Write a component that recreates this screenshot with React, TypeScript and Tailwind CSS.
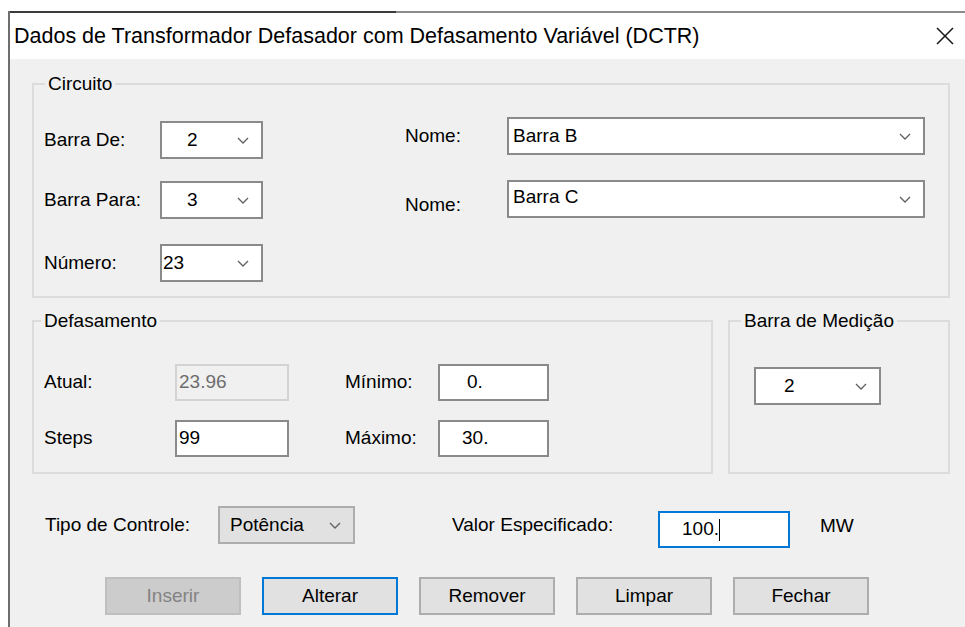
import React from 'react';

const font = { fontFamily: '"Liberation Sans", Arial, sans-serif' };

function Chevron() {
  return (
    <svg width="12" height="7" viewBox="0 0 12 7" className="shrink-0">
      <polyline points="1,1 6,6 11,1" fill="none" stroke="#606060" strokeWidth="1.3" />
    </svg>
  );
}

function Combo({ value, className, textClass }: { value: string; className: string; textClass: string }) {
  return (
    <div className={`flex items-center justify-between bg-white border-2 border-[#8a8a8a] h-[38px] pr-[12px] ${className}`}>
      <span className={textClass}>{value}</span>
      <Chevron />
    </div>
  );
}

function Field({ value, className, textClass }: { value: string; className: string; textClass: string }) {
  return (
    <div className={`flex items-center bg-white border-2 border-[#8a8a8a] h-[37px] ${className}`}>
      <span className={textClass}>{value}</span>
    </div>
  );
}

function Button({ label, state }: { label: string; state?: 'disabled' | 'default' }) {
  const look =
    state === 'disabled'
      ? 'bg-[#cccccc] border-[#bfbfbf] text-[#838383]'
      : state === 'default'
        ? 'bg-[#e1e1e1] border-[#0078d7] text-black'
        : 'bg-[#e1e1e1] border-[#adadad] text-black';
  return (
    <div className={`flex items-center justify-center w-[136px] h-[38px] border-2 ${look}`}>{label}</div>
  );
}

export default function App() {
  return (
    <div className="w-[965px] h-[627px] bg-white pt-[11px] overflow-hidden text-[19px] text-black" style={font}>
      <div className="ml-[8px] h-[616px] flex flex-col border-l-2 border-[#6e6e6e]">
        {/* top edge of the window frame */}
        <div className="flex h-[2px] shrink-0">
          <div className="w-[386px] bg-[#3c3c3c]" />
          <div className="flex-1 bg-[#8c8c8c]" />
        </div>

        {/* title bar */}
        <div className="h-[46px] shrink-0 bg-white flex items-center justify-between pl-[4px] pr-[10px]">
          <span className="text-[21.5px]">Dados de Transformador Defasador com Defasamento Variável (DCTR)</span>
          <svg width="20" height="20" viewBox="0 0 20 20">
            <line x1="2" y1="2" x2="18" y2="18" stroke="#1a1a1a" strokeWidth="1.6" />
            <line x1="18" y1="2" x2="2" y2="18" stroke="#1a1a1a" strokeWidth="1.6" />
          </svg>
        </div>

        {/* dialog body */}
        <div className="flex-1 bg-[#f0f0f0] pl-[22px] pr-[15px] pt-[14px]">
          <fieldset className="border-2 border-[#dcdcdc] h-[225px]">
            <legend className="ml-[11px] px-[3px] leading-[22px]">Circuito</legend>
            <div className="flex pl-[10px] pt-[26px]">
              <div className="flex flex-col w-[361px]">
                <div className="flex items-center h-[38px]">
                  <span className="w-[116px]">Barra De:</span>
                  <Combo value="2" className="w-[103px]" textClass="pl-[25px]" />
                </div>
                <div className="flex items-center h-[38px] mt-[22px]">
                  <span className="w-[116px]">Barra Para:</span>
                  <Combo value="3" className="w-[103px]" textClass="pl-[25px]" />
                </div>
                <div className="flex items-center h-[38px] mt-[25px]">
                  <span className="w-[116px]">Número:</span>
                  <Combo value="23" className="w-[103px]" textClass="pl-[1px]" />
                </div>
              </div>
              <div className="flex flex-col -mt-[4px]">
                <div className="flex items-center h-[38px]">
                  <span className="w-[102px]">Nome:</span>
                  <Combo value="Barra B" className="w-[418px]" textClass="pl-[4px]" />
                </div>
                <div className="flex items-center h-[38px] mt-[25px]">
                  <span className="w-[102px] pt-[12px]">Nome:</span>
                  <Combo value="Barra C" className="w-[418px]" textClass="pl-[4px] -mt-[3px]" />
                </div>
              </div>
            </div>
          </fieldset>

          <div className="flex gap-[15px] mt-[12px]">
            <fieldset className="border-2 border-[#dcdcdc] w-[681px] h-[164px]">
              <legend className="ml-[7px] px-[3px] leading-[22px]">Defasamento</legend>
              <div className="pl-[10px] pt-[32px]">
                <div className="flex items-center h-[37px]">
                  <span className="w-[131px]">Atual:</span>
                  <div className="flex items-center w-[114px] h-[37px] border-2 border-[#d3d3d3] bg-[#f0f0f0] text-[#6d6d6d] pl-[2px]">23.96</div>
                  <span className="w-[93px] ml-[56px]">Mínimo:</span>
                  <Field value="0." className="w-[111px]" textClass="pl-[27px]" />
                </div>
                <div className="flex items-center h-[37px] mt-[19px]">
                  <span className="w-[131px]">Steps</span>
                  <Field value="99" className="w-[114px]" textClass="pl-[2px]" />
                  <span className="w-[93px] ml-[56px]">Máximo:</span>
                  <Field value="30." className="w-[111px]" textClass="pl-[22px]" />
                </div>
              </div>
            </fieldset>

            <fieldset className="border-2 border-[#dcdcdc] w-[222px] h-[164px]">
              <legend className="ml-[11px] px-[3px] leading-[22px]">Barra de Medição</legend>
              <div className="pl-[24px] pt-[35px]">
                <Combo value="2" className="w-[127px]" textClass="pl-[28px]" />
              </div>
            </fieldset>
          </div>

          <div className="flex items-start mt-[32px] pl-[13px]">
            <span className="w-[173px] mt-[5px]">Tipo de Controle:</span>
            <div className="flex items-center justify-between w-[137px] h-[38px] bg-[#e1e1e1] border-2 border-[#adadad] pl-[10px] pr-[12px]">
              <span>Potência</span>
              <Chevron />
            </div>
            <span className="ml-[97px] w-[206px] mt-[5px]">Valor Especificado:</span>
            <div className="flex items-center w-[132px] h-[37px] bg-white border-2 border-[#0078d7] pl-[22px] mt-[5px]">
              <span>100.</span>
              <span className="w-[1px] h-[22px] bg-black" />
            </div>
            <span className="ml-[30px] mt-[6px]">MW</span>
          </div>

          <div className="flex gap-[21px] mt-[29px] pl-[73px]">
            <Button label="Inserir" state="disabled" />
            <Button label="Alterar" state="default" />
            <Button label="Remover" />
            <Button label="Limpar" />
            <Button label="Fechar" />
          </div>
        </div>
      </div>
    </div>
  );
}
